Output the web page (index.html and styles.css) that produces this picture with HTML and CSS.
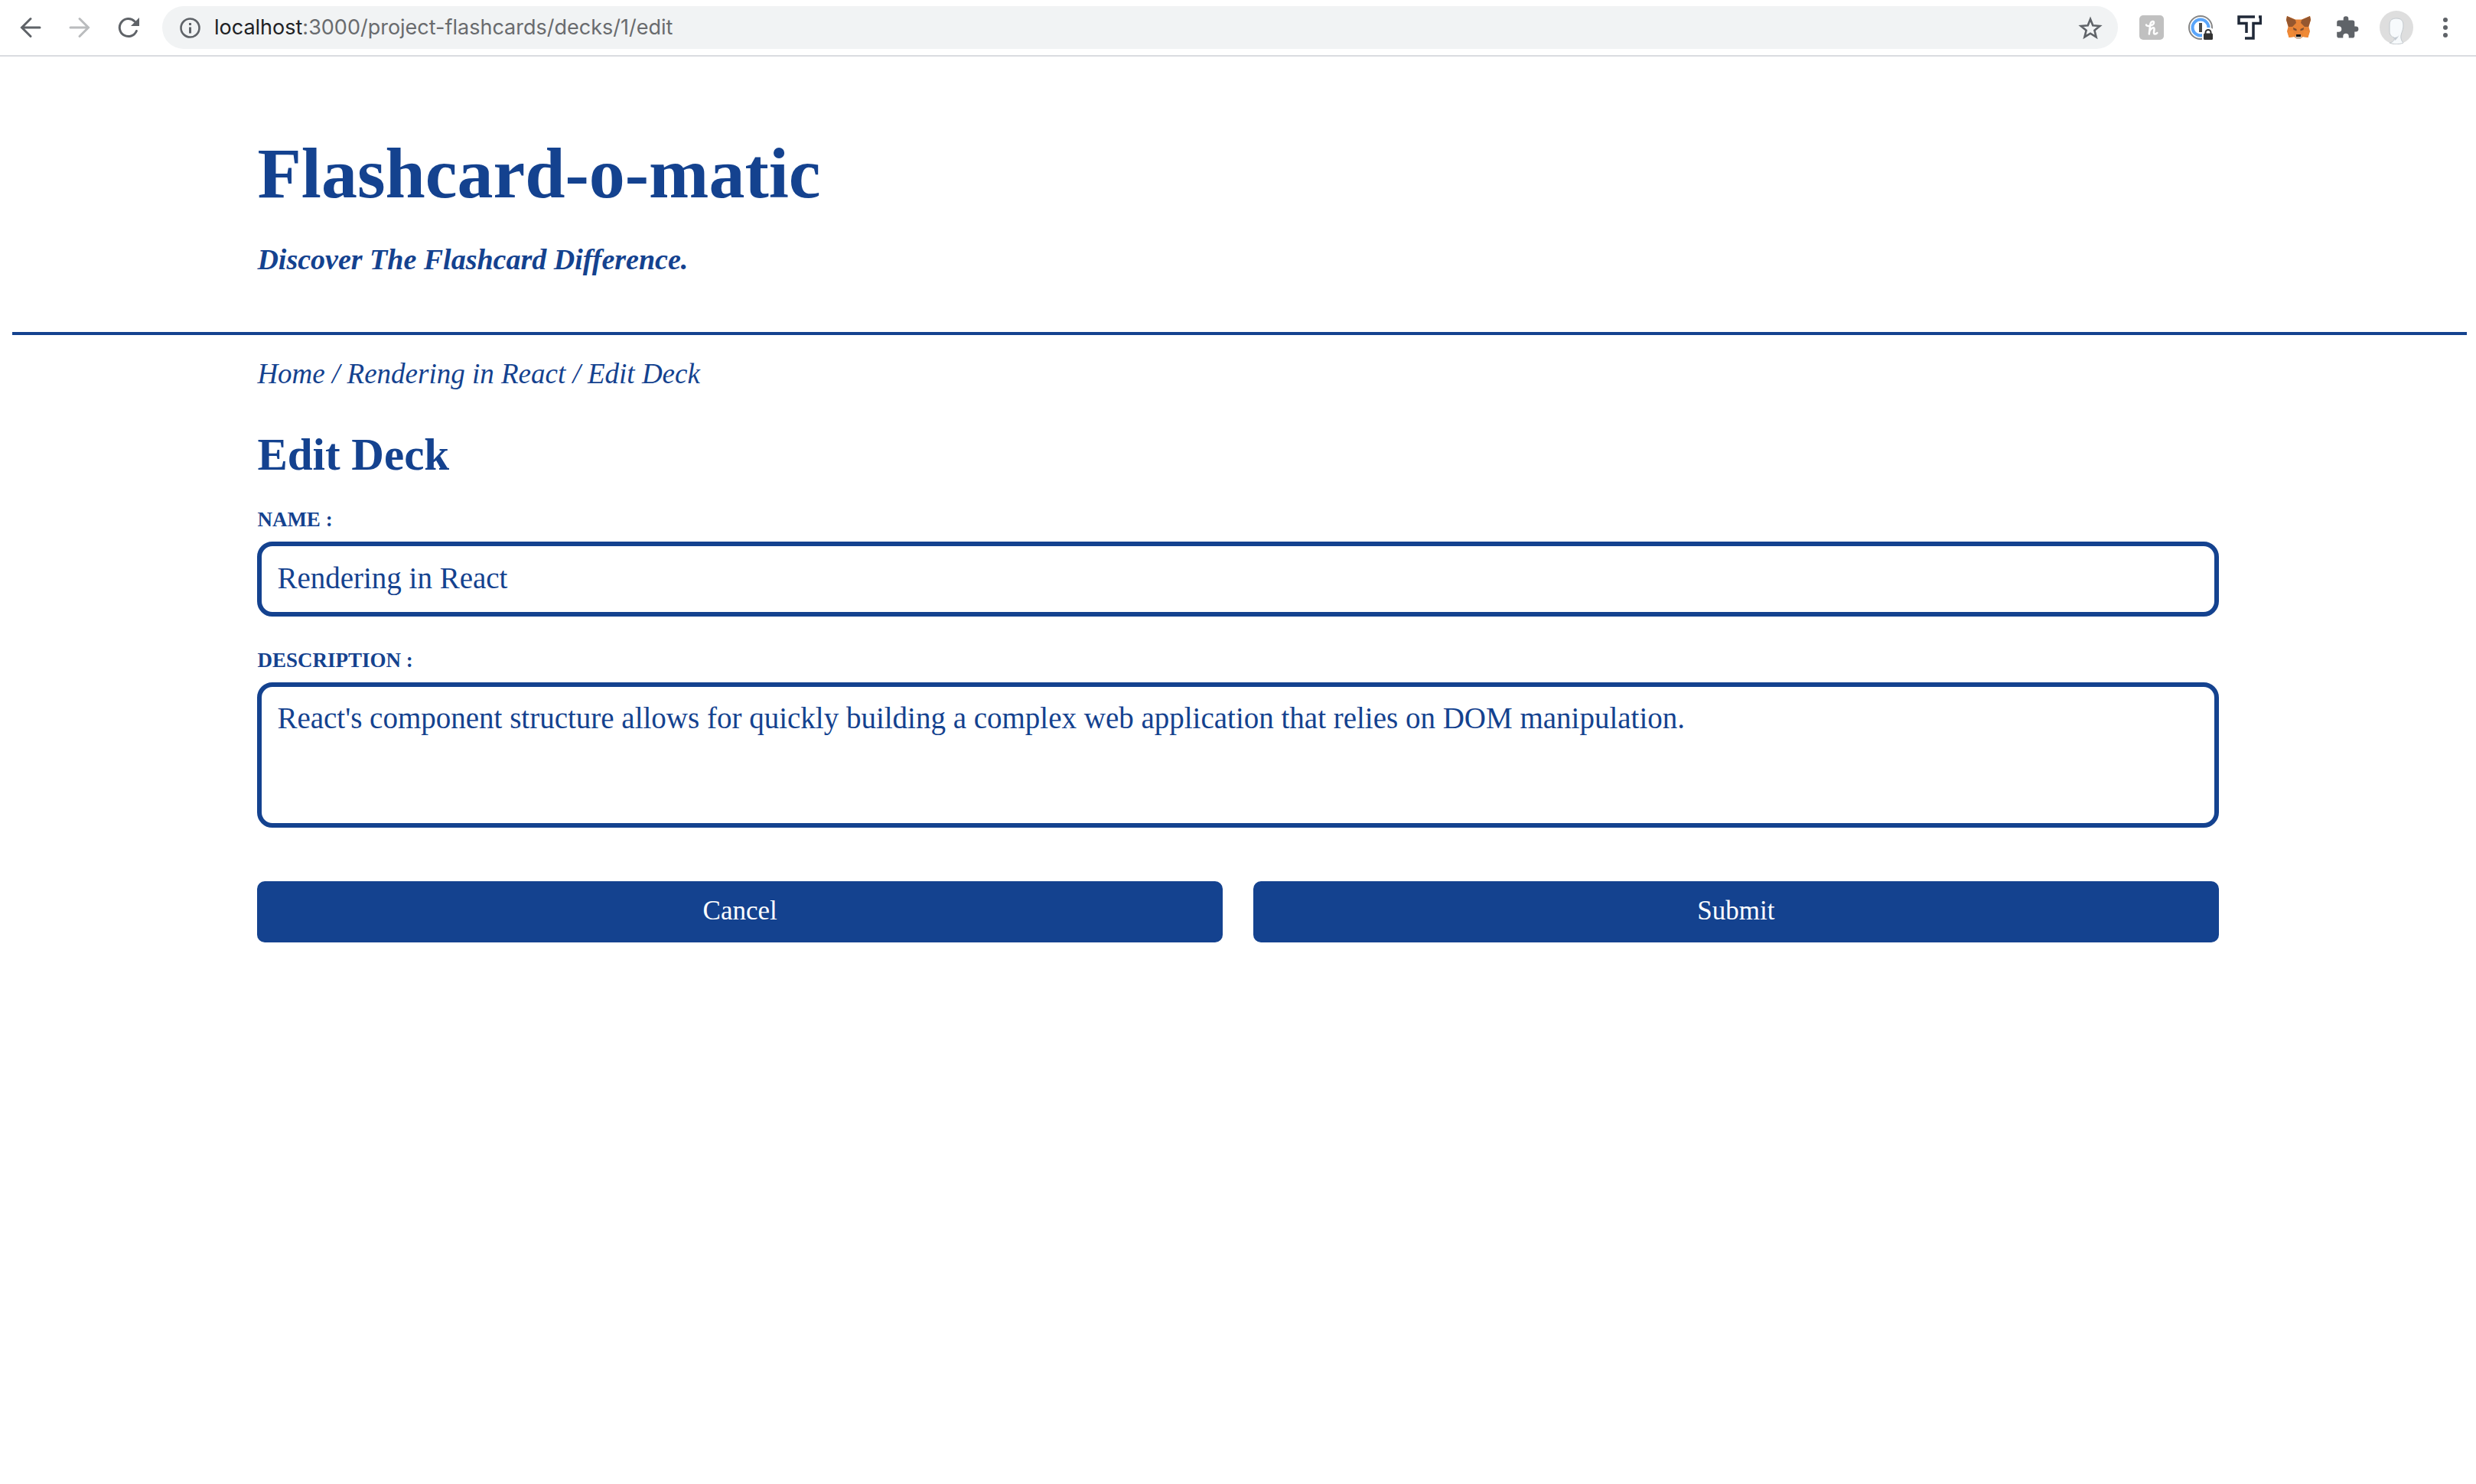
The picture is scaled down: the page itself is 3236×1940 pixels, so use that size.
FILE: index.html
```html
<!DOCTYPE html>
<html lang="en">
<head>
<meta charset="utf-8">
<title>Flashcard-o-matic</title>
<link rel="stylesheet" href="styles.css">
</head>
<body>
<nav class="toolbar" aria-label="Browser toolbar">
  <div class="nav-buttons">
    <button class="icon-button" type="button" aria-label="Back">
      <svg viewBox="0 0 32 32"><path d="M28 16H5M16 4.5L4.500 16L16 27.500" fill="none" stroke="#5f6368" stroke-width="3" stroke-linecap="round"/></svg>
    </button>
    <button class="icon-button" type="button" aria-label="Forward">
      <svg viewBox="0 0 32 32"><path d="M4 16H27M16 4.500L27.500 16L16 27.500" fill="none" stroke="#babcbe" stroke-width="3" stroke-linecap="round"/></svg>
    </button>
    <button class="icon-button" type="button" aria-label="Reload">
      <svg viewBox="0 0 32 32"><path d="M26.400 20.500A11.500 11.500 0 1 1 24 8" fill="none" stroke="#5f6368" stroke-width="3" stroke-linecap="round"/><path d="M30 3V14H19Z" fill="#5f6368"/></svg>
    </button>
  </div>
  <div class="omnibox">
    <svg class="icon" viewBox="0 0 32 32"><circle cx="16.500" cy="16.500" r="12" fill="none" stroke="#5f6368" stroke-width="2.600"/><path d="M15 10h3v3h-3zM15 15.500h3v8h-3z" fill="#5f6368"/></svg>
    <span class="url"><span class="host">localhost</span>:3000/project-flashcards/decks/1/edit</span>
    <button class="icon-button" type="button" aria-label="Bookmark this page">
      <svg viewBox="0 0 32 32"><path d="M16 5l3.300 8.300 9 .7-6.900 5.700 2.200 8.700-7.600-4.700-7.600 4.700 2.200-8.700L3.700 14l9-.7z" fill="none" stroke="#5f6368" stroke-width="2.600"/></svg>
    </button>
  </div>
  <div class="extensions">
    <button class="icon-button" type="button" aria-label="Honey">
      <svg viewBox="0 0 32 32"><rect width="32" height="32" rx="5" fill="#c0c0c0"/><path d="M9 12.500C9.500 15.500 19 13.500 19 9.500C19 7 14.800 7.500 14.300 12L12.800 24.500M13.300 21C14.500 17 20 14 19.500 18.500C19.200 21.500 18 24.500 20.500 24.500C22 24.500 22.500 24 23.300 23" fill="none" stroke="#fff" stroke-width="2.500" stroke-linecap="round"/></svg>
    </button>
    <button class="icon-button" type="button" aria-label="1Password">
      <svg viewBox="0 0 32 32"><circle cx="16" cy="16" r="15" fill="#fff" stroke="#858585" stroke-width="2"/><circle cx="16" cy="16" r="10.500" fill="none" stroke="#5aa5fa" stroke-width="4"/><path d="M14 10h4v12h-4z" fill="#4a4a4a"/><path d="M18 32V21Q20 16 26 16Q31 16 32 18V32Z" fill="#fff"/><path d="M22.500 25V22.500a3.500 3.500 0 0 1 7 0V25" fill="none" stroke="#333" stroke-width="2"/><rect x="20" y="23.500" width="12" height="8.500" rx="1.500" fill="#333"/></svg>
    </button>
    <button class="icon-button" type="button" aria-label="Thinkful">
      <svg viewBox="0 0 32 32"><path d="M23 2H2V10.500H12V23M28 2H30.500V10.500H21V30H10" fill="none" stroke="#202938" stroke-width="3.500"/></svg>
    </button>
    <button class="icon-button" type="button" aria-label="MetaMask">
      <svg viewBox="0 0 32 32"><path d="M1 1L12 5.500H20L31 1L32 6L29.500 15L31 21L28.500 29L22 28L18.500 30.500H13.500L10 28L3.500 29L1 21L2.500 15L0 6Z" fill="#e88437"/><path d="M1 1L12 6L13 10L8 15H3L0 6ZM31 1L20 6L19 10L24 15H29L32 6Z" fill="#95572f"/><path d="M2 20.500L9 20L11 28L3.500 29ZM30 20.500L23 20L21 28L28.500 29Z" fill="#f08a35"/><path d="M9 16l4.500 2v2.500l-4-1.500zM23 16l-4.500 2v2.500l4-1.500z" fill="#7b4d30"/><path d="M11.500 28l2-2.500h5l2 2.500-2.500 3h-4z" fill="#c5b9ae"/><path d="M13 25h6v3h-6z" fill="#171717"/></svg>
    </button>
    <button class="icon-button" type="button" aria-label="Extensions">
      <svg viewBox="0 0 32 32"><path d="M10.700 6.500V4.600a3.300 3.300 0 0 1 6.600 0v1.900h5.200a2.800 2.800 0 0 1 2.800 2.800v5.300H27a3.400 3.400 0 0 1 0 6.800h-1.700v5.300a2.800 2.800 0 0 1-2.800 2.800h-4.800v-2a3.700 3.700 0 0 0-7.400 0v2H5a2.800 2.800 0 0 1-2.800-2.800v-4.900h2.300a3.800 3.800 0 0 0 0-7.600H2.200V9.300A2.800 2.800 0 0 1 5 6.500z" fill="#5f6368"/></svg>
    </button>
    <button class="icon-button avatar" type="button" aria-label="Profile">
      <svg viewBox="0 0 44 44"><circle cx="22" cy="22" r="22" fill="#dedede"/><path d="M13 42C18 41 20 38 19 35C15 34 13 31 13 27V18C13 12 17 10 22 10C28 10 31 13 31 19C31 27 27 30 28 36C28.500 39 30 41 31 42C25 44.500 18 44 13 42Z" fill="#f7fafc" stroke="#c3c9ce"/><path d="M19 35Q24 35 26 31Q23 37 20 39Z" fill="#c3cbd2"/></svg>
    </button>
    <button class="icon-button" type="button" aria-label="Menu">
      <svg viewBox="0 0 32 32"><g fill="#5f6368"><circle cx="16" cy="6" r="3"/><circle cx="16" cy="16" r="3"/><circle cx="16" cy="26" r="3"/></g></svg>
    </button>
  </div>
</nav>
<div class="page">
  <header class="masthead">
    <h1>Flashcard-o-matic</h1>
    <p class="tagline">Discover The Flashcard Difference.</p>
  </header>
  <main class="content">
    <nav class="breadcrumb" aria-label="Breadcrumb"><a href="#home">Home</a> / <a href="#deck">Rendering in React</a> / Edit Deck</nav>
    <h2>Edit Deck</h2>
    <form>
      <div class="field">
        <label for="name">NAME :</label>
        <input id="name" type="text" value="Rendering in React">
      </div>
      <div class="field">
        <label for="description">DESCRIPTION :</label>
        <textarea id="description">React's component structure allows for quickly building a complex web application that relies on DOM manipulation.</textarea>
      </div>
      <div class="actions">
        <button type="button">Cancel</button>
        <button type="submit">Submit</button>
      </div>
    </form>
  </main>
</div>
</body>
</html>
```
FILE: styles.css
```css
:root {
  --blue: #14428f;
}

* {
  box-sizing: border-box;
}

body {
  margin: 0;
  background: #fff;
  color: var(--blue);
  font-family: "Liberation Serif", serif;
}

.toolbar {
  display: flex;
  align-items: center;
  gap: 28px;
  padding: 8px 24px;
  border-bottom: 2px solid #dadce0;
}

.nav-buttons,
.extensions {
  display: flex;
  align-items: center;
  gap: 32px;
}

.icon,
.icon-button {
  flex: none;
  width: 32px;
  height: 32px;
}

.icon-button {
  padding: 0;
  border: 0;
  background: none;
}

.icon-button svg {
  display: block;
  width: 100%;
  height: 100%;
}

.avatar {
  width: 44px;
  height: 44px;
  margin: 0 -6px;
}

.omnibox {
  display: flex;
  flex: 1;
  align-items: center;
  gap: 16px;
  height: 56px;
  padding: 0 20px;
  border-radius: 28px;
  background: #f1f3f4;
}

.url {
  flex: 1;
  color: #696b6e;
  font: 27px/32px Inter, sans-serif;
}

.host {
  color: #202124;
}

.page {
  padding: 0 16px;
}

.masthead,
.content {
  padding-right: 10%;
  padding-left: 10%;
}

.masthead {
  margin-right: -4px;
  padding-top: 92px;
  padding-bottom: 71px;
  border-bottom: 4px solid var(--blue);
}

h1,
h2,
p {
  margin: 0;
}

h1 {
  font-size: 94px;
  line-height: 120px;
}

.tagline {
  margin-top: 29px;
  font-size: 38px;
  font-style: italic;
  font-weight: bold;
  line-height: 48px;
}

.content {
  padding-top: 27px;
}

.breadcrumb {
  font-size: 37px;
  font-style: italic;
  line-height: 48px;
}

.breadcrumb a {
  color: inherit;
  text-decoration: none;
}

h2 {
  margin-top: 45px;
  font-size: 59px;
  line-height: 72px;
}

form {
  display: flex;
  flex-direction: column;
  gap: 41px;
  margin-top: 33px;
}

.field {
  display: flex;
  flex-direction: column;
  gap: 13px;
}

label {
  font-size: 27px;
  font-weight: bold;
  line-height: 32px;
}

input,
textarea {
  display: block;
  width: 100%;
  margin: 0;
  padding: 17px 20px 21px;
  border: 6px solid var(--blue);
  border-radius: 20px;
  background: #fff;
  color: inherit;
  font: 39px/48px "Liberation Serif", serif;
}

input {
  height: 98px;
}

textarea {
  height: 190px;
  resize: none;
}

.actions {
  display: grid;
  grid-template-columns: 1fr 1fr;
  gap: 40px;
  margin-top: 29px;
}

.actions button {
  padding: 19px 20px 21px;
  border: 0;
  border-radius: 10px;
  background: var(--blue);
  color: #fff;
  font: 35px/40px "Liberation Serif", serif;
}
```
